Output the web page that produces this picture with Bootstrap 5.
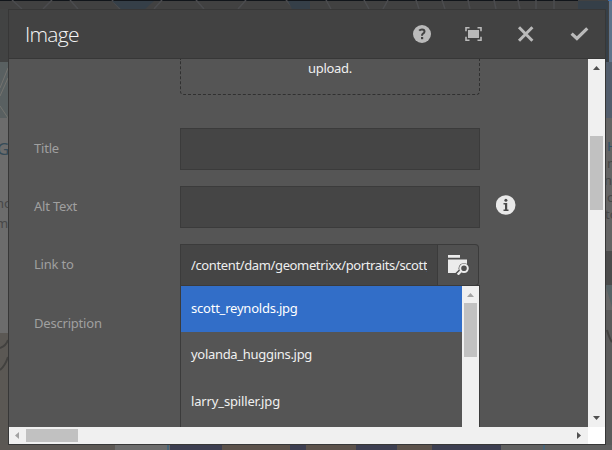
<!DOCTYPE html>
<html lang="en">
<head>
<meta charset="utf-8">
<meta name="viewport" content="width=device-width, initial-scale=1">
<title>Image</title>
<link href="https://cdn.jsdelivr.net/npm/bootstrap@5.3.0/dist/css/bootstrap.min.css" rel="stylesheet">
<style>
body{width:612px;height:450px;overflow:hidden;background:#686868;font-family:"Noto Sans","Open Sans",sans-serif;font-size:13px;line-height:18px;color:#f0f0f0}
.backdrop-art{position:absolute;inset:0}
.dialog{position:absolute;left:8px;top:9px;width:598px;height:436px;background:#555;border:1px solid #373737}
.dialog-head{height:49px;background:#424242;border-bottom:1px solid #373737;padding-left:16px;padding-right:16px}
.dialog-title{font-family:"Open Sans",sans-serif;font-size:21px;font-weight:300;line-height:28px;letter-spacing:-.75px;color:#f5f5f5}
.tools{gap:34px;color:#bababa}
.tools svg:not(:last-child){margin-left:-1px;margin-right:1px}
.pane{height:368px}
.form-pane{width:579px;padding-left:25px}
.field-label{width:146px;color:#a0a0a0;letter-spacing:-.2px;padding-bottom:2px}
.drop{width:300px;height:36px;margin:0 0 33px 146px;border:1px dashed #303030;border-top:0;border-radius:0 0 4px 4px;letter-spacing:-.3px}
.drop span{line-height:19px}
.field-row{height:42px;margin-bottom:16px}
.form-control.field{width:300px;height:42px;border:1px solid #3b3b3b;border-radius:0;background:#454545;color:#eee;padding:0 11px;font-size:13px}
.form-control.path{width:258px;padding-left:10px;padding-right:10px;letter-spacing:-.37px}
.browse{width:41px;height:42px;background:#505050;border:1px solid #3b3b3b;border-left:0;border-radius:0 4px 4px 0}
.browse svg{margin:0 0 1px 2px}
.menu{position:absolute;left:171px;top:275px;width:300px;height:142px;background:#555;border:1px solid #3b3b3b;border-bottom:0}
.list-group-item.choice{height:46px;margin:0;padding:0 10px 2px;border:0;border-radius:0;background:#555;color:#f0f0f0;letter-spacing:-.3px}
.list-group-item.choice.active{background:#326ec8;color:#fff;letter-spacing:-.22px}
.list-group-item.choice:last-child{padding-bottom:0;letter-spacing:-.15px}
.vbar{width:17px;background:#f0f0f0}
.hbar{height:17px;background:#f0f0f0}
</style>
</head>
<body>
<svg class="backdrop-art" width="612" height="450" aria-hidden="true">
<path fill="#414141" d="M0 0h612v62H0z"/><path fill="#11151a" d="M0 0h578v1H0z"/>
<g fill="none" stroke="#4b4c4f" stroke-width="1.5"><path d="M12 0l10 9M52 0l-9 9M70 0l8 9M112 0l8 9M162 0l-8 9M196 0l8 9M246 0l-8 9M286 0l8 9M326 0l5 9M364 0l5 9M388 0l-5 9M416 0l3 9M442 0l3 9M468 0l2 9M494 0l2 9M518 0l2 9M536 0v9M554 0v9"/></g>
<path fill="#353f48" d="M112 1h42l-9 8h-24zM288 1h22v8h-18zM578 1h30v61h-30z"/><path fill="#3d6fae" d="M608 0h4v1h-4z"/>
<path fill="#60748b" d="M609 1h3v61h-3z"/><path fill="#525d6c" d="M606 62h6v56h-6z"/>
<path fill="#424343" d="M0 9h8v53H0z"/><path fill="#596061" d="M0 62h8v56H0z"/><path fill="none" stroke="#74736f" d="M0 88l8-20M0 96l8-18M0 106l8 12"/>
<path fill="#6c6c6c" d="M0 118h8v215H0z"/><path fill="#646464" d="M606 118h6v133h-6z"/><path fill="#4b4b4b" d="M606 251h6v34h-6z"/><path fill="#576366" d="M606 285h6v22l-6-20z"/><path fill="#5b5b5b" d="M606 310h6v140h-6z"/>
<path fill="#5b5854" d="M0 333h8v117H0z"/><path fill="none" stroke="#42413f" stroke-width="2" d="M0 348q6-2 8-8M0 370q5-4 8-13M607 330q3 10 5 12"/>
<path fill="#5c5854" d="M0 445h115v5H0z"/><path fill="#6c6c6c" d="M115 445h52v5h-52z"/><path fill="#3d3f51" d="M170 445h331v5H170z"/><path fill="#5c524b" d="M222 445h68v5h-68zM306 445h50v5h-50zM397 445h35v5h-35z"/><path fill="#606060" d="M501 445h111v5H501z"/><path stroke="#47657a" stroke-width="2" d="M168 445v5M544 445v5"/>
<g font-family="Noto Sans" fill="#474747" font-size="13"><text x="-3" y="155" font-size="17" fill="#354b58">G</text><text x="-4" y="208">no</text><text x="-4" y="228">m</text><text x="607" y="151" fill="#2f5068">H</text><text x="607" y="168">n</text><text x="604" y="185">ne</text><text x="607" y="202">o</text><text x="605" y="219">to</text></g>
</svg>
<main class="dialog d-flex flex-column">
<header class="dialog-head d-flex align-items-center justify-content-between flex-shrink-0">
<h1 class="dialog-title m-0">Image</h1>
<div class="tools d-flex align-items-center">
<svg width="18" height="18" viewBox="0 0 18 18"><circle cx="9" cy="9" r="9" fill="currentColor"/><path d="M6.2 5.7Q7.2 4.5 9 4.5q2.5 0 2.5 2 0 1.3-1.5 2.1-1 .6-1 2.1" fill="none" stroke="#424242" stroke-width="2"/><path fill="#424242" d="M8 12h2.2v2.2H8z"/></svg>
<svg width="17" height="14" viewBox="0 0 17 14"><path fill="currentColor" d="M3 3h11v8H3z"/><path fill="none" stroke="currentColor" stroke-width="1.6" d="M4.5.8H1v3.5M12.5.8H16v3.5M4.5 13.2H1V9.7M12.5 13.2H16V9.7"/></svg>
<svg width="19" height="16" viewBox="0 0 19 16"><path fill="none" stroke="currentColor" stroke-width="3" d="M3 1.3l13.4 13.4M16.4 1.3L3 14.7"/></svg>
<svg width="19" height="14" viewBox="0 0 19 14"><path fill="none" stroke="currentColor" stroke-width="3.2" d="M1.6 6.6l5.3 4.9L17.3 1.4"/></svg>
</div>
</header>
<div class="pane d-flex flex-shrink-0">
<section class="form-pane overflow-hidden">
<div class="drop text-center"><span>upload.</span></div>
<div class="field-row d-flex align-items-center"><label class="field-label" for="t">Title</label><input id="t" class="form-control field"></div>
<div class="field-row d-flex align-items-center"><label class="field-label" for="a">Alt Text</label><input id="a" class="form-control field">
<svg class="ms-3 mb-1" width="20" height="20" viewBox="0 0 20 20"><circle cx="9.7" cy="10" r="9.8" fill="#e9e9e9"/><g fill="#4b4b4b"><circle cx="9.9" cy="5.3" r="1.5"/><path d="M7.5 8h3.7v6.6h1.3V16h-5v-1.4H9V9.4H7.5z"/></g></svg></div>
<div class="field-row d-flex align-items-center"><label class="field-label" for="l">Link to</label><input id="l" class="form-control field path" value="/content/dam/geometrixx/portraits/scott_reynolds.jpg"><button class="browse btn p-0 d-flex align-items-center justify-content-center" aria-label="Browse"><svg width="22" height="20" viewBox="0 0 22 20"><path fill="#ececec" d="M0 0h12v2.7H0zM0 4.5h19V18H0z"/><circle cx="16" cy="13.3" r="5.4" fill="#505050"/><path stroke="#505050" stroke-width="5" d="M13 16l-4 4"/><circle cx="16" cy="13.3" r="3.8" fill="none" stroke="#ececec" stroke-width="2"/><path stroke="#ececec" stroke-width="2.4" d="M13.2 16l-3.5 3.6"/></svg></button></div>
<div class="field-row d-flex align-items-center"><span class="field-label pb-0">Description</span></div>
</section>
<svg class="vbar" width="17" height="368"><path fill="#f0f0f0" d="M0 0h17v368H0z"/><path fill="#c1c1c1" d="M2 77h13v74H2z"/><path fill="#505050" d="M5 11l3.5-4L12 11zM5 357l3.5 4 3.5-4z"/></svg>
</div>
<div class="hbar d-flex flex-shrink-0"><svg width="596" height="17"><path fill="#f0f0f0" d="M0 0h596v17H0z"/><path fill="#fff" d="M579 0h17v17h-17z"/><path fill="#c1c1c1" d="M17 2h52v13H17z"/><path fill="#a3a3a3" d="M10 5L6 8.5l4 3.5z"/><path fill="#505050" d="M568 5l4 3.5-4 3.5z"/></svg></div>
<div class="menu d-flex">
<div class="list-group list-group-flush flex-grow-1 overflow-hidden rounded-0">
<div class="list-group-item choice active d-flex align-items-center flex-shrink-0">scott_reynolds.jpg</div>
<div class="list-group-item choice d-flex align-items-center flex-shrink-0">yolanda_huggins.jpg</div>
<div class="list-group-item choice d-flex align-items-center flex-shrink-0">larry_spiller.jpg</div>
</div>
<svg class="vbar" width="17" height="141"><path fill="#c1c1c1" d="M2 17h13v54H2z"/><path fill="#a3a3a3" d="M5 11l3.5-4L12 11z"/></svg>
</div>
</main>
<script src="https://cdn.jsdelivr.net/npm/bootstrap@5.3.0/dist/js/bootstrap.bundle.min.js"></script>
</body>
</html>
